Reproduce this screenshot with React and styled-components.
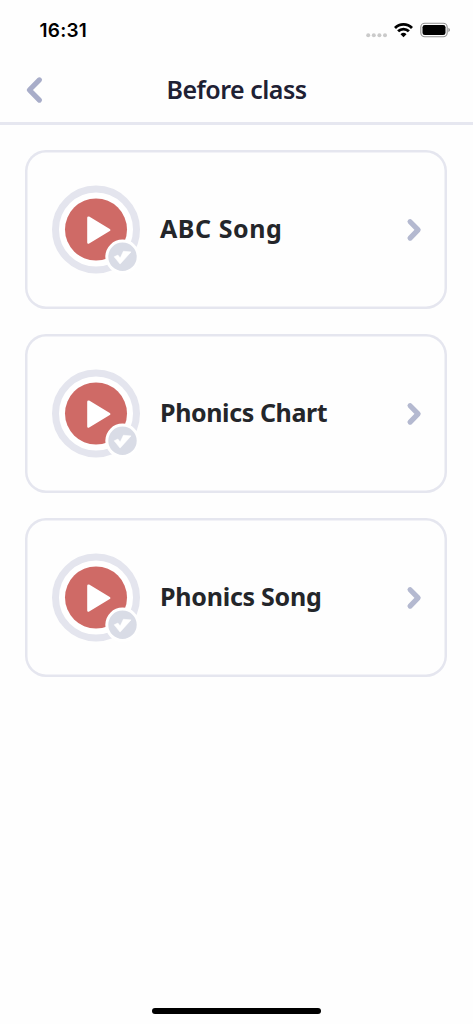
import React from "react";
import styled, { createGlobalStyle } from "styled-components";

const lessons = [
  { title: "ABC Song", spacing: "0.55px" },
  { title: "Phonics Chart", spacing: "-0.4px" },
  { title: "Phonics Song", spacing: "-0.25px" },
];

const GlobalStyle = createGlobalStyle`
  * {
    box-sizing: border-box;
  }

  body {
    margin: 0;
    background: #fefefe;
  }
`;

const Screen = styled.div`
  display: flex;
  flex-direction: column;
  height: 1024px;
  background: #fefefe;
  font-family: "Noto Sans", "Open Sans", sans-serif;
`;

const StatusBar = styled.div`
  display: flex;
  align-items: center;
  justify-content: space-between;
  height: 60px;
  padding: 0 22px 0 39.5px;
`;

const Time = styled.span`
  font-family: Inter, sans-serif;
  font-size: 19px;
  font-weight: 600;
  letter-spacing: 0.25px;
  line-height: 24px;
  color: #000;
  margin-top: 2px;
`;

const Header = styled.header`
  display: grid;
  grid-template-columns: 70px 1fr 70px;
  align-items: center;
  height: 65px;
  padding-bottom: 2px;
  border-bottom: 3px solid #e6e7f0;
`;

const BackButton = styled.button`
  display: flex;
  padding: 0 0 0 24px;
  border: 0;
  background: none;
`;

const Title = styled.h1`
  margin: 0;
  padding-bottom: 2px;
  text-align: center;
  font-size: 25px;
  font-weight: 600;
  line-height: 32px;
  letter-spacing: -0.5px;
  white-space: nowrap;
  color: #1e2134;
`;

const List = styled.main`
  display: flex;
  flex-direction: column;
  flex: 1;
  gap: 25px;
  padding: 25px 26px 0 25px;
`;

const Card = styled.div`
  display: flex;
  align-items: center;
  height: 159px;
  padding: 0 22px 0 27px;
  border-radius: 21px;
  box-shadow: inset 0 0 0 2.5px #e5e6ef;
`;

const CardTitle = styled.span`
  flex: 1;
  margin-left: 19px;
  padding-bottom: 3px;
  font-size: 25px;
  font-weight: 700;
  line-height: 32px;
  letter-spacing: ${({ $spacing }) => $spacing};
  white-space: nowrap;
  color: #24262a;
`;

const HomeArea = styled.footer`
  display: flex;
  justify-content: center;
  height: 16px;
`;

const HomeBar = styled.div`
  width: 169px;
  height: 6px;
  border-radius: 3px;
  background: #000;
`;

const StatusIcons = () => (
  <svg width="86" height="20" viewBox="365 20 86 20">
    <g fill="#cacaca">
      <circle cx="368.2" cy="35.2" r="2" />
      <circle cx="373.8" cy="35.2" r="2" />
      <circle cx="379.4" cy="35.2" r="2" />
      <circle cx="385" cy="35.2" r="2" />
    </g>
    <g fill="none" stroke="#000" strokeWidth="2.8">
      <path d="M395 27.9a12 12 0 0 1 17 0" />
      <path d="M398.1 31.3a7.6 7.6 0 0 1 10.8 0" />
    </g>
    <path d="M403.5 37.2l-3-3a4.3 4.3 0 0 1 6 0z" />
    <rect x="420.8" y="23.3" width="26.4" height="13.4" rx="4" fill="none" stroke="#929292" strokeWidth="1.1" />
    <rect x="422.5" y="25" width="23" height="10" rx="2.3" />
    <path d="M448.4 27.8q3.3 2.2 0 4.4z" fill="#929292" />
  </svg>
);

const BackIcon = () => (
  <svg width="20" height="30" viewBox="24 75 20 30">
    <path d="M39.4 79.9L29.4 90l10 10.1" fill="none" stroke="#a8adc9" strokeWidth="5.2" strokeLinecap="round" strokeLinejoin="round" />
  </svg>
);

const NextIcon = () => (
  <svg width="20" height="26" viewBox="405 216.5 20 26">
    <path d="M410.1 221.2l8 8.2-8 8.2" fill="none" stroke="#b4b9d0" strokeWidth="5.2" strokeLinecap="round" strokeLinejoin="round" />
  </svg>
);

const PlayBadge = () => (
  <svg width="89" height="89" viewBox="51.5 185 89 89">
    <circle cx="95.5" cy="229.5" r="40.5" fill="#fff" stroke="#e4e5ee" strokeWidth="7" />
    <circle cx="95.5" cy="229.5" r="31" fill="#cf6a66" />
    <path d="M88 217.7L108.6 230 88 242.5z" fill="#fff" stroke="#fff" strokeWidth="2.6" strokeLinejoin="round" />
    <circle cx="122" cy="256.8" r="15.7" fill="#d9dce6" stroke="#fff" strokeWidth="3" />
    <path d="M113.7 256.8l3.7-1.7 2.3 3 3.2-6.8 7.6 0.6-10.9 12.2z" fill="#fff" stroke="#fff" strokeWidth=".6" strokeLinejoin="round" />
  </svg>
);

export default function App() {
  return (
    <Screen>
      <GlobalStyle />
      <StatusBar>
        <Time>16:31</Time>
        <StatusIcons />
      </StatusBar>

      <Header>
        <BackButton aria-label="Back">
          <BackIcon />
        </BackButton>
        <Title>Before class</Title>
      </Header>

      <List>
        {lessons.map(({ title, spacing }) => (
          <Card key={title}>
            <PlayBadge />
            <CardTitle $spacing={spacing}>{title}</CardTitle>
            <NextIcon />
          </Card>
        ))}
      </List>

      <HomeArea>
        <HomeBar />
      </HomeArea>
    </Screen>
  );
}
